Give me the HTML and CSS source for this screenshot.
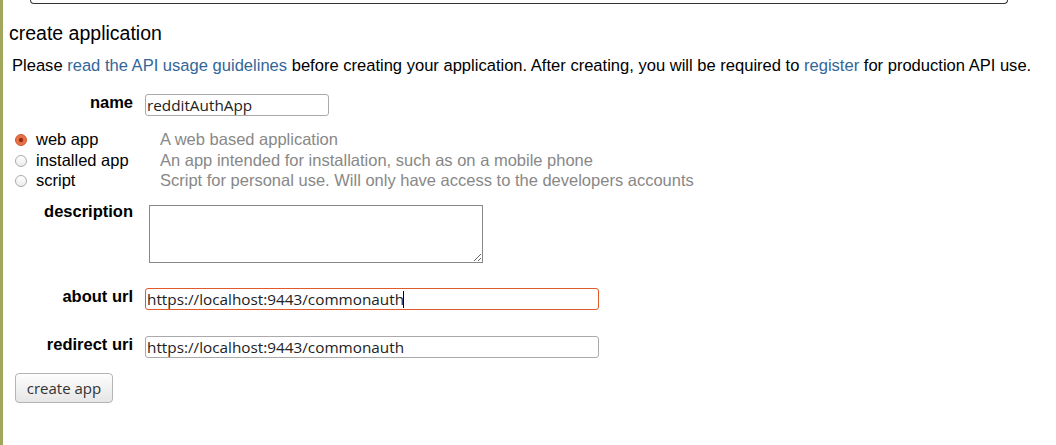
FILE: index.html
```html
<!DOCTYPE html>
<html>
<head>
<meta charset="utf-8">
<title>create application</title>
<link rel="stylesheet" href="styles.css">
</head>
<body>
<div class="page">
  <div class="topbox"></div>
  <h1 class="title">create application</h1>
  <p class="intro">Please <a href="#">read the API usage guidelines</a> before creating your application. After creating, you will be required to <a href="#">register</a> for production API use.</p>
  <form class="appform">
    <div class="field">
      <label class="flabel">name</label>
      <input class="text short" type="text" value="redditAuthApp">
    </div>
    <div class="types">
      <div class="type">
        <label class="tlabel"><input class="radio" type="radio" name="app_type" checked>web app</label>
        <span class="tdesc">A web based application</span>
      </div>
      <div class="type">
        <label class="tlabel"><input class="radio" type="radio" name="app_type">installed app</label>
        <span class="tdesc">An app intended for installation, such as on a mobile phone</span>
      </div>
      <div class="type">
        <label class="tlabel"><input class="radio" type="radio" name="app_type">script</label>
        <span class="tdesc">Script for personal use. Will only have access to the developers accounts</span>
      </div>
    </div>
    <div class="field descrow">
      <label class="flabel">description</label>
      <textarea class="area"></textarea>
    </div>
    <div class="field urlrow">
      <label class="flabel">about url</label>
      <span class="inputwrap">
        <input class="text long focused" type="text" value="https://localhost:9443/commonauth">
        <span class="caret"></span>
      </span>
    </div>
    <div class="field urlrow">
      <label class="flabel">redirect uri</label>
      <input class="text long" type="text" value="https://localhost:9443/commonauth">
    </div>
    <button class="submit" type="button">create app</button>
  </form>
</div>
</body>
</html>
```
FILE: styles.css
```css
html, body {
  margin: 0;
  padding: 0;
  background: #fff;
}
body {
  font-family: "Liberation Sans", Arial, sans-serif;
  font-size: 16.5px;
  color: #000;
}
.page {
  border-left: 3px solid #a0a65c;
  min-height: 445px;
  box-sizing: border-box;
  overflow: hidden;
}
.topbox {
  height: 3px;
  width: 976px;
  margin-left: 27px;
  border: 1px solid #333;
  border-top: 0;
  border-radius: 0 0 9px 9px;
}
.title {
  margin: 18px 0 0 6px;
  font-size: 19.5px;
  font-weight: normal;
  line-height: 22px;
}
.intro {
  margin: 11.5px 0 0 9px;
  font-size: 16.56px;
  line-height: 20px;
  white-space: nowrap;
}
.intro a {
  color: #369;
  text-decoration: none;
}
.appform {
  margin: 18.5px 0 0 0;
  padding-left: 9px;
}
.field {
  display: flex;
  align-items: flex-start;
}
.flabel {
  width: 121px;
  flex: none;
  margin-right: 12px;
  text-align: right;
  font-weight: bold;
  line-height: 16px;
}
.text {
  display: block;
  height: 22px;
  box-sizing: border-box;
  margin: 0;
  padding: 0 2px 0 1px;
  border: 1px solid #aaa;
  border-radius: 3px;
  background: #fff;
  font-family: "Open Sans", "Noto Sans", sans-serif;
  font-size: 15.3px;
  color: #222;
  outline: none;
}
.short { width: 184px; }
.long { width: 454px; }
.focused { border-color: #e05a2a; }
.inputwrap {
  position: relative;
  display: block;
}
.caret {
  position: absolute;
  left: 258px;
  top: 3px;
  width: 1px;
  height: 17px;
  background: #000;
}
.types {
  margin-top: 13.3px;
}
.type {
  display: flex;
  line-height: 20.5px;
}
.tlabel {
  width: 148px;
  flex: none;
  display: flex;
  align-items: center;
}
.radio {
  appearance: none;
  -webkit-appearance: none;
  width: 12px;
  height: 12px;
  margin: 1px 9px 0 3px;
  box-sizing: border-box;
  border: 1px solid #aaa;
  border-radius: 50%;
  background: linear-gradient(#fff, #ececec);
  flex: none;
}
.radio:checked {
  border-color: #c8552e;
  background: radial-gradient(circle, #8c3113 0 1.8px, #e86a3e 2.4px, #f08058 100%);
}
.tdesc {
  color: #888;
  white-space: nowrap;
}
.descrow {
  margin-top: 14px;
}
.descrow .flabel {
  margin-top: -2px;
}
.area {
  display: block;
  width: 334px;
  height: 58px;
  box-sizing: border-box;
  margin: 0 0 0 4px;
  border: 1px solid #888;
  border-radius: 0;
  padding: 2px;
  font-family: "Open Sans", sans-serif;
  font-size: 15px;
  resize: both;
}
.urlrow {
  margin-top: 25.5px;
}
.submit {
  display: block;
  margin: 15.5px 0 0 3px;
  width: 98px;
  height: 30px;
  box-sizing: border-box;
  border: 1px solid #b5b5b5;
  border-radius: 4px;
  background: linear-gradient(#fdfdfd, #e6e6e6);
  font-family: "Open Sans", sans-serif;
  font-size: 15px;
  color: #333;
  padding: 0;
}
```
